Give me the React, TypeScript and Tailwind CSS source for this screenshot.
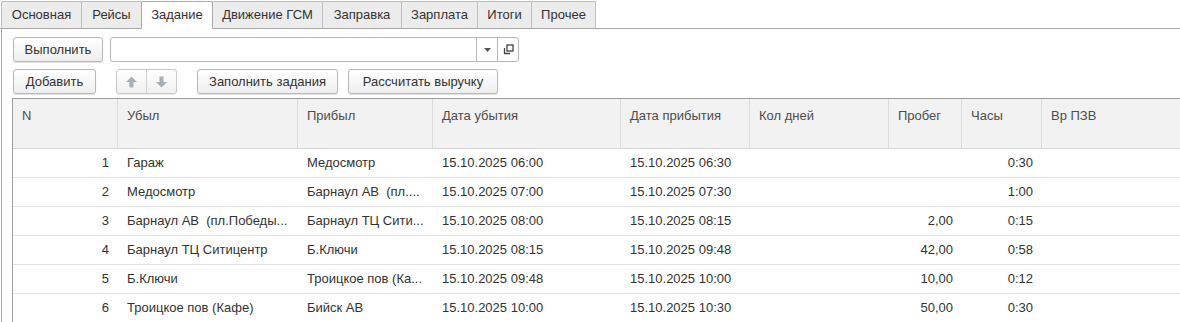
import React from "react";

const tabs = [
  { label: "Основная", w: "w-[81px]" },
  { label: "Рейсы", w: "w-[61px]" },
  { label: "Задание", w: "w-[72px]", active: true },
  { label: "Движение ГСМ", w: "w-[111px]" },
  { label: "Заправка", w: "w-[80px]" },
  { label: "Зарплата", w: "w-[77px]" },
  { label: "Итоги", w: "w-[55px]" },
  { label: "Прочее", w: "w-[65px]" },
];

const cols = [
  { title: "N", w: "w-[105px]", align: "right" },
  { title: "Убыл", w: "w-[180px]" },
  { title: "Прибыл", w: "w-[135px]" },
  { title: "Дата убытия", w: "w-[188px]" },
  { title: "Дата прибытия", w: "w-[129px]" },
  { title: "Кол дней", w: "w-[139px]" },
  { title: "Пробег", w: "w-[73px]", align: "right" },
  { title: "Часы", w: "w-[80px]", align: "right" },
  { title: "Вр ПЗВ", w: "w-[139px]" },
];

const rows = [
  ["1", "Гараж", "Медосмотр", "15.10.2025 06:00", "15.10.2025 06:30", "", "", "0:30", ""],
  ["2", "Медосмотр", "Барнаул АВ  (пл....", "15.10.2025 07:00", "15.10.2025 07:30", "", "", "1:00", ""],
  ["3", "Барнаул АВ  (пл.Победы...", "Барнаул ТЦ Сити...", "15.10.2025 08:00", "15.10.2025 08:15", "", "2,00", "0:15", ""],
  ["4", "Барнаул ТЦ Ситицентр", "Б.Ключи", "15.10.2025 08:15", "15.10.2025 09:48", "", "42,00", "0:58", ""],
  ["5", "Б.Ключи", "Троицкое пов (Ка...", "15.10.2025 09:48", "15.10.2025 10:00", "", "10,00", "0:12", ""],
  ["6", "Троицкое пов (Кафе)", "Бийск АВ", "15.10.2025 10:00", "15.10.2025 10:30", "", "50,00", "0:30", ""],
];

const btn =
  "h-[25px] flex items-center justify-center rounded-[3px] border border-[#b8b8b8] bg-gradient-to-b from-white to-[#eeeeee] shadow-[0_1px_1px_rgba(0,0,0,0.12)] text-[#333] text-[13px]";

function Arrow({ down }: { down?: boolean }) {
  return (
    <svg width="11" height="12" viewBox="0 0 11 12" className={down ? "rotate-180" : ""}>
      <path d="M5.5 0.5 L11 6 H7.5 V11.5 H3.5 V6 H0 Z" fill="#a9b0b5" />
    </svg>
  );
}

export default function App() {
  return (
    <div className="w-[1180px] h-[322px] overflow-hidden bg-white font-['Liberation_Sans',Arial,sans-serif] text-[13px] text-[#333]">
      {/* tabs */}
      <div className="flex items-end h-[29px] border-b border-[#a8a8a8] pl-[1px]">
        {tabs.map((t) => (
          <div
            key={t.label}
            className={`${t.w} h-[28px] -mb-[1px] flex items-center justify-center rounded-t-[2px] border -mr-[1px] ${
              t.active ? "bg-white border-[#a8a8a8] border-b-white relative z-10" : "bg-[#ececec] border-[#bdbdbd] border-b-[#a8a8a8]"
            }`}
          >
            <span className="pb-[1px] text-[#333]">{t.label}</span>
          </div>
        ))}
      </div>

      {/* panel */}
      <div className="ml-[1px] h-[293px] border-l border-[#a8a8a8] pl-[10px] pt-[8px]">
        <div className="flex items-center gap-[7px] pl-[1px]">
          <div className={`${btn} w-[90px]`}>Выполнить</div>
          <div className="w-[409px] h-[25px] flex rounded-[3px] border border-[#b8b8b8] bg-white">
            <div className="flex-1" />
            <div className="w-[21px] border-l border-[#b8b8b8] flex items-center justify-center">
              <svg width="7" height="4" viewBox="0 0 7 4">
                <path d="M0 0 H7 L3.5 4 Z" fill="#555" />
              </svg>
            </div>
            <div className="w-[21px] border-l border-[#b8b8b8] flex items-center justify-center">
              <svg width="11" height="11" viewBox="0 0 11 11">
                <rect x="4" y="1" width="6" height="6" fill="none" stroke="#444" strokeWidth="1.3" />
                <path d="M1.5 4 V9.5 H7" fill="none" stroke="#444" strokeWidth="1.3" />
              </svg>
            </div>
          </div>
        </div>

        <div className="flex items-center mt-[7px] pl-[1px]">
          <div className={`${btn} w-[83px]`}>Добавить</div>
          <div className="ml-[20px] w-[61px] h-[25px] flex rounded-[3px] border border-[#c8c8c8] bg-gradient-to-b from-white to-[#f0f0f0] shadow-[0_1px_1px_rgba(0,0,0,0.08)]">
            <div className="flex-1 flex items-center justify-center border-r border-[#d0d0d0]">
              <Arrow />
            </div>
            <div className="flex-1 flex items-center justify-center">
              <Arrow down />
            </div>
          </div>
          <div className={`${btn} w-[141px] ml-[20px]`}>Заполнить задания</div>
          <div className={`${btn} w-[150px] ml-[10px]`}>Рассчитать выручку</div>
        </div>

        {/* table */}
        <div className="mt-[4px] border-t border-l border-[#a0a0a0]">
          <div className="flex h-[50px] bg-[#f2f2f2] border-b border-[#d4d4d4]">
            {cols.map((c, i) => (
              <div
                key={c.title}
                className={`${c.w} shrink-0 pl-[9px] pt-[7px] text-[#4d4d4d] ${
                  i < cols.length - 1 ? "border-r border-[#dcdcdc]" : ""
                }`}
              >
                {c.title}
              </div>
            ))}
          </div>
          {rows.map((r, ri) => (
            <div key={ri} className="flex h-[29px] border-b border-[#e2e2e2]">
              {r.map((v, ci) => (
                <div
                  key={ci}
                  className={`${cols[ci].w} shrink-0 flex items-center whitespace-pre overflow-hidden ${
                    cols[ci].align === "right" ? "justify-end pr-[9px]" : "pl-[9px]"
                  }`}
                >
                  {v}
                </div>
              ))}
            </div>
          ))}
        </div>
      </div>
    </div>
  );
}
